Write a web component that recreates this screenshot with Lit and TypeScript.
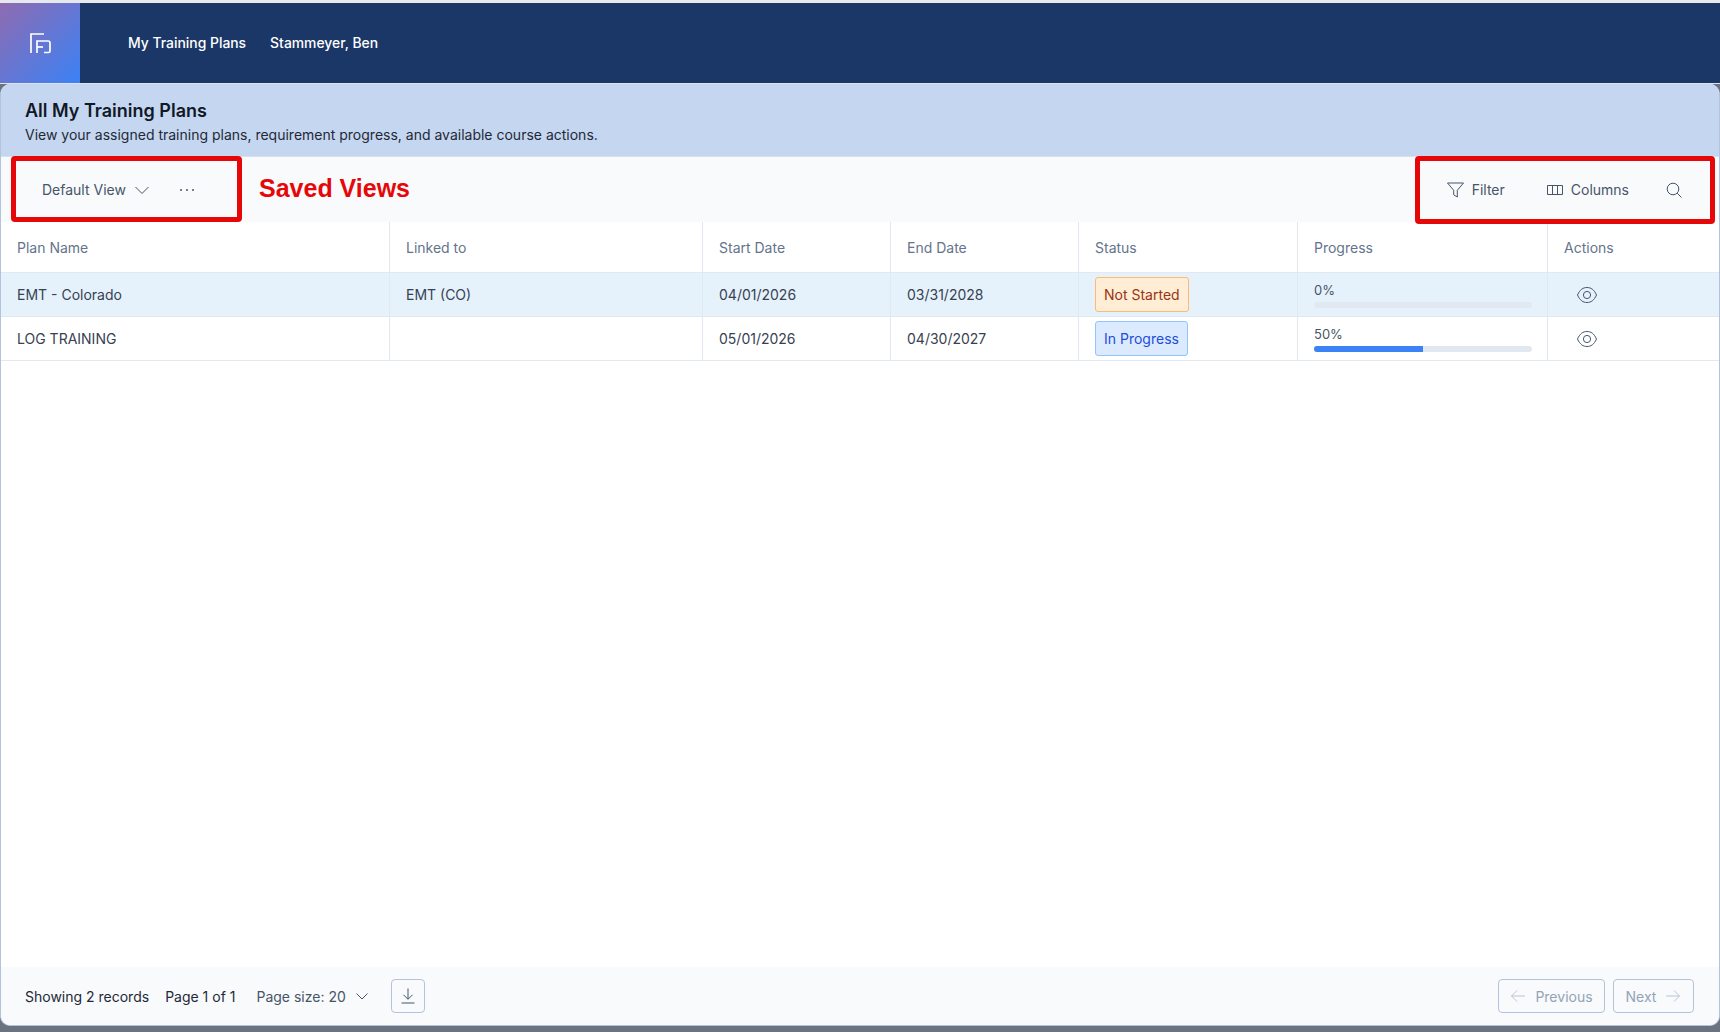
import { LitElement, html, css, svg } from 'lit';
import { customElement, state } from 'lit/decorators.js';

interface Plan {
  name: string;
  linked: string;
  start: string;
  end: string;
  status: string;
  progress: number;
}

const eyeIcon = svg`<path d="M.5 8C3 2.500 6 .5 10 .5S17 2.500 19.500 8C17 13.500 14 15.500 10 15.500S3 13.500 .5 8Z"/><circle cx="10" cy="8" r="3.600"/>`;

@customElement('app-root')
export class AppRoot extends LitElement {
  @state() private plans: Plan[] = [
    { name: 'EMT - Colorado', linked: 'EMT (CO)', start: '04/01/2026', end: '03/31/2028', status: 'Not Started', progress: 0 },
    { name: 'LOG TRAINING', linked: '', start: '05/01/2026', end: '04/30/2027', status: 'In Progress', progress: 50 },
  ];

  static styles = css`
    :host {
      display: block;
      font-family: Inter, 'Liberation Sans', sans-serif;
      color: #1f2937;
    }

    .page {
      position: relative;
      height: 1032px;
      box-sizing: border-box;
      display: flex;
      flex-direction: column;
      background: #6b7280;
      overflow: hidden;
    }

    .topstrip {
      height: 3px;
      background: #e7e9ee;
    }

    .nav {
      height: 80px;
      display: flex;
      align-items: center;
      background: #1b3768;
      color: #fff;
      font-size: 13.900px;
      font-weight: 500;
      flex: none;
    }

    .logo {
      width: 80px;
      height: 80px;
      display: flex;
      align-items: center;
      justify-content: center;
      background: linear-gradient(135deg, #8f6bb0, #3b82f6);
    }

    .logo svg {
      width: 22px;
      height: 22px;
      fill: none;
      stroke: #fff;
      stroke-width: 1.700;
    }

    .links {
      display: flex;
      gap: 24px;
      margin: -1px 0 0 48px;
    }

    .divider {
      height: 1px;
      background: #dfe4ec;
      flex: none;
    }

    .card {
      flex: 1;
      display: flex;
      flex-direction: column;
      min-height: 0;
      background: #fff;
      border: 1px solid #b4c3dc;
      border-top: none;
      border-radius: 10px;
      overflow: hidden;
      margin-bottom: 6px;
    }

    .heading {
      height: 73px;
      flex: none;
      box-sizing: border-box;
      padding: 15px 24px 0;
      background: #c5d6f0;
      border-bottom: 1px solid #d5e0f0;
    }

    h1 {
      margin: 0;
      font-size: 18px;
      line-height: 24px;
      font-weight: 600;
      color: #111827;
    }

    .heading p {
      margin: 2px 0 0;
      font-size: 14px;
      line-height: 20px;
      color: #1f2937;
    }

    .toolbar {
      height: 65px;
      flex: none;
      display: flex;
      align-items: center;
      justify-content: space-between;
      background: #f8fafc;
      font-size: 14px;
      color: #475569;
    }

    .views,
    .tools {
      display: flex;
      align-items: center;
    }

    .views {
      margin-left: 41px;
    }

    .dots {
      margin-left: 30px;
      display: flex;
      gap: 4px;
    }

    .dots i {
      width: 2px;
      height: 2px;
      border-radius: 50%;
      background: #475569;
    }

    .tools {
      margin-right: 37px;
    }

    .tool {
      display: flex;
      align-items: center;
      gap: 8px;
    }

    .tool + .tool {
      margin-left: 42px;
    }

    .tool + .tool.search {
      margin-left: 37px;
    }

    svg.ico {
      fill: none;
      stroke: #475569;
      stroke-width: 1;
      flex: none;
      display: block;
    }

    .views svg.ico {
      margin-left: 8px;
    }

    .row {
      display: grid;
      grid-template-columns: 389px 313px 188px 188px 219px 250px 1fr;
      border-bottom: 1px solid #e2e8f0;
      box-sizing: border-box;
    }

    .row > div {
      display: flex;
      align-items: center;
      padding-left: 16px;
      border-right: 1px solid #e2e8f0;
      font-size: 14px;
      color: #374151;
      min-width: 0;
    }

    .row > div:last-child {
      border-right: none;
    }

    .row.head {
      height: 51px;
      flex: none;
    }

    .row.head > div {
      color: #64748b;
      font-weight: 400;
    }

    .row.body {
      height: 44px;
      flex: none;
    }

    .row.selected {
      background: #e5f2fc;
    }

    .badge {
      height: 35px;
      box-sizing: border-box;
      display: flex;
      align-items: center;
      padding: 0 8px;
      border-radius: 3px;
      border: 1px solid;
    }

    .badge.not-started {
      background: #ffedd5;
      border-color: #fdba74;
      color: #9a3412;
    }

    .badge.in-progress {
      background: #dbeafe;
      border-color: #93c5fd;
      color: #1d4ed8;
    }

    .row > div.prog {
      flex-direction: column;
      align-items: stretch;
      justify-content: center;
      padding-right: 15px;
    }

    .pct {
      font-size: 13px;
      line-height: 16px;
      color: #475569;
      margin-bottom: 4px;
    }

    .track {
      height: 6px;
      border-radius: 3px;
      background: #e2e8f0;
      overflow: hidden;
      margin-bottom: -1px;
    }

    .fill {
      height: 100%;
      background: #3b82f6;
    }

    .row > div.act {
      padding-left: 29px;
    }

    .spacer {
      flex: 1;
    }

    .footer {
      height: 58px;
      flex: none;
      display: flex;
      align-items: center;
      padding: 0 25px 0 24px;
      background: #f8fafc;
      font-size: 14px;
      color: #1f2937;
    }

    .footer .page-no {
      margin-left: 16px;
    }

    .footer .size {
      margin-left: 21px;
      color: #475569;
      display: flex;
      align-items: center;
      gap: 9px;
    }

    .btn {
      height: 34px;
      box-sizing: border-box;
      display: flex;
      align-items: center;
      justify-content: center;
      border: 1px solid #b4c3dc;
      border-radius: 4px;
      background: transparent;
      font: inherit;
      color: #94a3b8;
      gap: 9px;
    }

    .btn.download {
      width: 34px;
      margin-left: 22px;
    }

    .btn.prev {
      width: 107px;
      margin-left: auto;
    }

    .btn.next {
      width: 81px;
      margin-left: 8px;
    }

    .btn.prev svg.ico,
    .btn.next svg.ico {
      stroke: #b8c4d4;
    }

    .mark {
      position: absolute;
      box-sizing: border-box;
      border: 5px solid #e60808;
      border-radius: 4px;
    }

    .mark.left {
      left: 11px;
      top: 156px;
      width: 231px;
      height: 66px;
    }

    .mark.right {
      left: 1415px;
      top: 156px;
      width: 300px;
      height: 68px;
    }

    .note {
      position: absolute;
      left: 259px;
      top: 172px;
      font-family: 'Liberation Sans', Arial, sans-serif;
      font-size: 25px;
      line-height: 32px;
      font-weight: 700;
      color: #e60808;
    }
  `;

  private renderRow(p: Plan, i: number) {
    const cls = p.status === 'Not Started' ? 'not-started' : 'in-progress';
    return html`
      <div class="row body ${i === 0 ? 'selected' : ''}">
        <div>${p.name}</div>
        <div>${p.linked}</div>
        <div>${p.start}</div>
        <div>${p.end}</div>
        <div><span class="badge ${cls}">${p.status}</span></div>
        <div class="prog">
          <span class="pct">${p.progress}%</span>
          <div class="track"><div class="fill" style="width: ${p.progress}%"></div></div>
        </div>
        <div class="act">
          <svg class="ico" width="20" height="16" viewBox="0 0 20 16">${eyeIcon}</svg>
        </div>
      </div>
    `;
  }

  render() {
    return html`
      <div class="page">
        <div class="topstrip"></div>
        <div class="nav">
          <div class="logo">
            <svg viewBox="0 0 22 22">
              <path d="M2 21V2H15" />
              <path d="M8 21V9H19Q21 9 21 11V19Q21 20.500 19.500 20.500H15" />
              <path d="M8 15H14" />
            </svg>
          </div>
          <div class="links">
            <span>My Training Plans</span>
            <span>Stammeyer, Ben</span>
          </div>
        </div>
        <div class="divider"></div>
        <div class="card">
          <div class="heading">
            <h1>All My Training Plans</h1>
            <p>View your assigned training plans, requirement progress, and available course actions.</p>
          </div>
          <div class="toolbar">
            <div class="views">
              <span>Default View</span>
              <svg class="ico" width="16" height="14" viewBox="0 0 16 14"><path d="M1.500 4L8 10.500L14.500 4"/></svg>
              <div class="dots"><i></i><i></i><i></i></div>
            </div>
            <div class="tools">
              <div class="tool">
                <svg class="ico" width="17" height="16" viewBox="0 0 17 16"><path d="M.5 1H16.500L10.300 8.300V15L6.700 12.800V8.300Z"/></svg>
                <span>Filter</span>
              </div>
              <div class="tool">
                <svg class="ico" width="16" height="12" viewBox="0 0 16 12"><path d="M.5 1.500H15.500V10.500H.5ZM5.500 1.500V10.500M10.500 1.500V10.500"/></svg>
                <span>Columns</span>
              </div>
              <div class="tool search">
                <svg class="ico" width="16" height="16" viewBox="0 0 16 16"><circle cx="7" cy="7" r="5.800"/><path d="M11.200 11.200L15.500 15.500"/></svg>
              </div>
            </div>
          </div>
          <div class="row head">
            <div>Plan Name</div>
            <div>Linked to</div>
            <div>Start Date</div>
            <div>End Date</div>
            <div>Status</div>
            <div>Progress</div>
            <div>Actions</div>
          </div>
          ${this.plans.map((p, i) => this.renderRow(p, i))}
          <div class="spacer"></div>
          <div class="footer">
            <span>Showing 2 records</span>
            <span class="page-no">Page 1 of 1</span>
            <span class="size">
              Page size: 20
              <svg class="ico" width="14" height="14" viewBox="0 0 14 14"><path d="M1.500 4.500L7 10L12.500 4.500"/></svg>
            </span>
            <button class="btn download">
              <svg class="ico" width="16" height="18" viewBox="0 0 16 18"><path d="M8 1.500V12M3.500 7.800L8 12.300L12.500 7.800M1.500 16H14.500"/></svg>
            </button>
            <button class="btn prev">
              <svg class="ico" width="16" height="14" viewBox="0 0 16 14"><path d="M15 7H1.500M7 1.500L1.500 7L7 12.500"/></svg>
              <span>Previous</span>
            </button>
            <button class="btn next">
              <span>Next</span>
              <svg class="ico" width="16" height="14" viewBox="0 0 16 14"><path d="M1 7H14.500M9 1.500L14.500 7L9 12.500"/></svg>
            </button>
          </div>
        </div>
        <div class="mark left"></div>
        <div class="mark right"></div>
        <div class="note">Saved Views</div>
      </div>
    `;
  }
}
